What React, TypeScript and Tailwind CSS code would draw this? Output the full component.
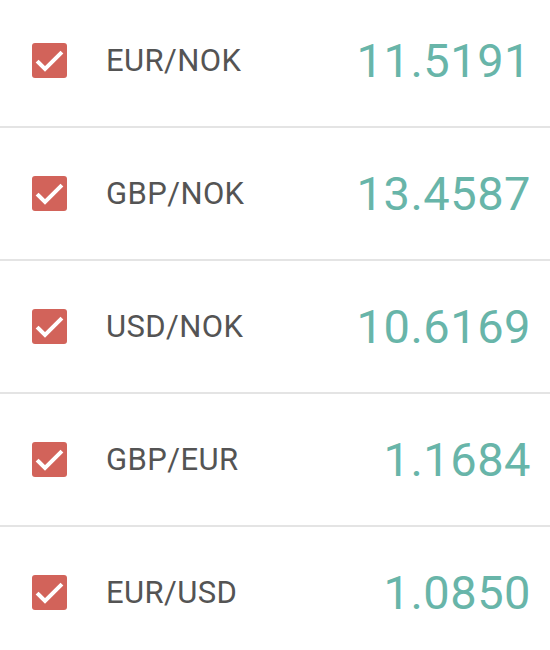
import React from "react";

const rows = [
  { pair: "EUR/NOK", rate: "11.5191" },
  { pair: "GBP/NOK", rate: "13.4587" },
  { pair: "USD/NOK", rate: "10.6169" },
  { pair: "GBP/EUR", rate: "1.1684" },
  { pair: "EUR/USD", rate: "1.0850" },
];

function Check() {
  return (
    <div className="w-[35px] h-[35px] rounded-[3px] bg-[#d2635a] shrink-0 flex items-center justify-center">
      <svg width="35" height="35" viewBox="0 0 35 35">
        <path d="M6.5 19.5 L13 26 L28.5 10.5" fill="none" stroke="#ffffff" strokeWidth="4" strokeLinecap="square" />
      </svg>
    </div>
  );
}

export default function App() {
  return (
    <div className="w-[550px] h-[650px] overflow-hidden bg-white" style={{ fontFamily: "Roboto, 'Noto Sans', sans-serif" }}>
      <div className="-mt-[5px]">
        {rows.map((r) => (
          <div key={r.pair} className="h-[133px] border-b-2 border-[#e4e4e4] flex items-center pl-[32px] pr-[19px]">
            <Check />
            <span className="ml-[39px] text-[31px] tracking-[0.4px] text-[#545454] leading-none">{r.pair}</span>
            <span className="ml-auto text-[47px] tracking-[0.5px] text-[#68b5a9] leading-none">{r.rate}</span>
          </div>
        ))}
      </div>
    </div>
  );
}
